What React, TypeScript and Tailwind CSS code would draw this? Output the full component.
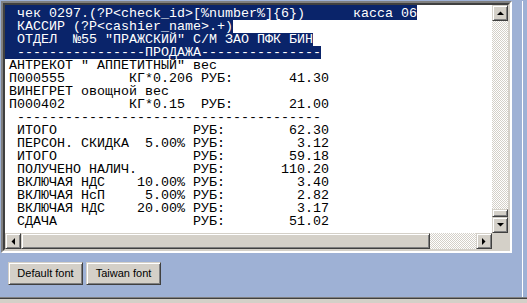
import React from 'react';

const sp = (n: number) => ' '.repeat(n);

const selected = [
  ' чек 0297.(?P<check_id>[%number%]{6})' + sp(6) + 'касса 06',
  ' КАССИР (?P<cashier_name>.+)',
  ' ОТДЕЛ  №55 "ПРАЖСКИЙ" С/М ЗАО ПФК БИН',
  ' ' + '-'.repeat(16) + 'ПРОДАЖА' + '-'.repeat(15),
];

const plain = [
  'АНТРЕКОТ " АППЕТИТНЫЙ" вес',
  'П000555' + sp(8) + 'КГ*0.206 РУБ:' + sp(7) + '41.30',
  'ВИНЕГРЕТ овощной вес',
  'П000402' + sp(8) + 'КГ*0.15  РУБ:' + sp(7) + '21.00',
  ' ' + '-'.repeat(38),
  ' ИТОГО' + sp(17) + 'РУБ:' + sp(8) + '62.30',
  ' ПЕРСОН. СКИДКА  5.00% РУБ:' + sp(9) + '3.12',
  ' ИТОГО' + sp(17) + 'РУБ:' + sp(8) + '59.18',
  ' ПОЛУЧЕНО НАЛИЧ.' + sp(7) + 'РУБ:' + sp(7) + '110.20',
  ' ВКЛЮЧАЯ НДС    10.00% РУБ:' + sp(9) + '3.40',
  ' ВКЛЮЧАЯ НсП     5.00% РУБ:' + sp(9) + '2.82',
  ' ВКЛЮЧАЯ НДС    20.00% РУБ:' + sp(9) + '3.17',
  ' СДАЧА' + sp(17) + 'РУБ:' + sp(8) + '51.02',
];

const hatch =
  'bg-[repeating-conic-gradient(#d4d0c8_0_25%,#ffffff_0_50%)] bg-[length:2px_2px]';

// classic raised 3d face
const raised =
  'bg-[#d4d0c8] border border-t-[#d4d0c8] border-l-[#d4d0c8] border-r-[#404040] border-b-[#404040] shadow-[inset_1px_1px_#ffffff,inset_-1px_-1px_#808080]';

const Arrow = ({ dir }: { dir: 'up' | 'down' | 'left' | 'right' }) => {
  const pts = {
    up: '0,4 7,4 3.5,0.5',
    down: '0,0 7,0 3.5,3.5',
    left: '4,0 4,7 0.5,3.5',
    right: '0,0 0,7 3.5,3.5',
  }[dir];
  const vertical = dir === 'up' || dir === 'down';
  return (
    <svg width={vertical ? 7 : 4} height={vertical ? 4 : 7} viewBox={vertical ? '0 0 7 4' : '0 0 4 7'}>
      <polygon points={pts} fill="#000" />
    </svg>
  );
};

const ScrollButton = ({ dir }: { dir: 'up' | 'down' | 'left' | 'right' }) => (
  <div className={`w-[16px] h-[16px] flex items-center justify-center ${raised}`}>
    <Arrow dir={dir} />
  </div>
);

const Button = ({ label }: { label: string }) => (
  <button
    className={`w-[75px] h-[23px] flex items-center justify-center text-[11px] text-black ${raised}`}
    style={{ fontFamily: '"Liberation Sans", Arial, sans-serif' }}
  >
    {label}
  </button>
);

export default function App() {
  return (
    <div className="w-[527px] h-[303px] flex flex-col bg-[#d4d0c8] overflow-hidden">
      <div className="h-[297px] bg-[#9eb1d5]">
        <div className="w-[523px] h-full border-r border-white">
          {/* receipt text box */}
          <div className="ml-[1px] mt-[1px] w-[511px] border-2 border-t-[#808080] border-l-[#808080] border-r-white border-b-white">
            <div className="border-2 border-t-[#404040] border-l-[#404040] border-r-[#d4d0c8] border-b-[#d4d0c8] grid grid-cols-[487px_16px] grid-rows-[228px_16px]">
              <div
                className="bg-white overflow-hidden text-black text-[13.33px] leading-[13px] whitespace-pre"
                style={{ fontFamily: '"Liberation Mono", "Courier New", monospace' }}
              >
                {selected.map((l, i) => (
                  <div
                    key={i}
                    className={`w-fit pl-[4px] bg-[#0a246a] text-white ${i === 0 ? 'pt-[2px]' : ''}`}
                  >
                    {l}
                  </div>
                ))}
                {plain.map((l, i) => (
                  <div key={i} className="pl-[4px]">
                    {l}
                  </div>
                ))}
              </div>
              <div className="flex flex-col">
                <ScrollButton dir="up" />
                <div className={`flex-1 ${hatch}`} />
                <div className={`h-[8px] ${raised}`} />
                <ScrollButton dir="down" />
              </div>
              <div className="flex">
                <ScrollButton dir="left" />
                <div className={`w-[409px] ${raised}`} />
                <div className={`flex-1 ${hatch}`} />
                <ScrollButton dir="right" />
              </div>
              <div className="bg-[#d4d0c8]" />
            </div>
          </div>

          <div className="flex gap-[3px] pl-[8px] pt-[9px]">
            <Button label="Default font" />
            <Button label="Taiwan font" />
          </div>
        </div>
      </div>
      <div className="h-[2px] bg-[#404040] border-t border-[#808080]" />
    </div>
  );
}
